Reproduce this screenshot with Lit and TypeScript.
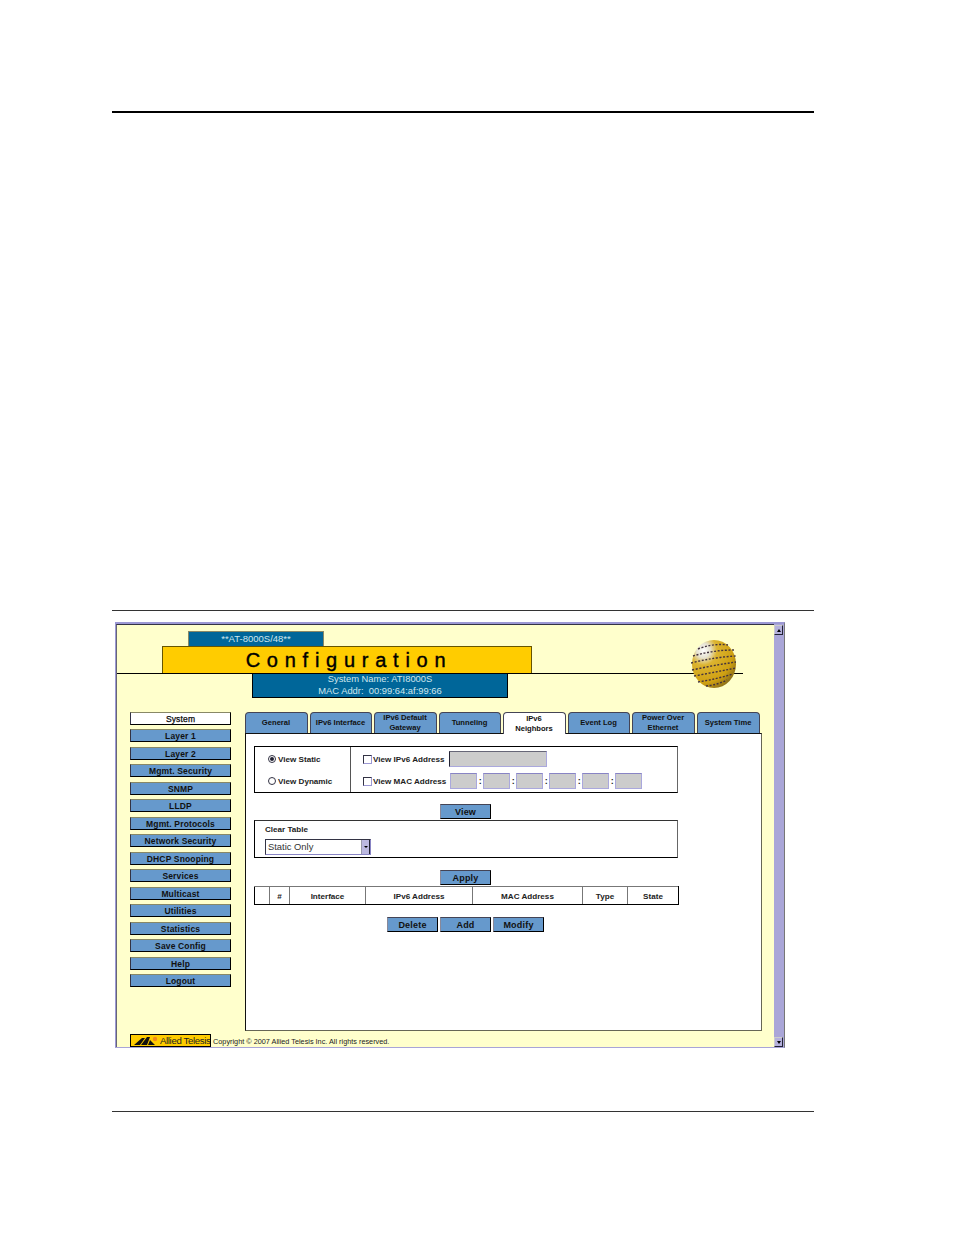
import { LitElement, html, css, svg } from "lit";
import { customElement } from "lit/decorators.js";

const NAV = ["System","Layer 1","Layer 2","Mgmt. Security","SNMP","LLDP","Mgmt. Protocols","Network Security","DHCP Snooping","Services","Multicast","Utilities","Statistics","Save Config","Help","Logout"];
const TABS: [string, number, boolean?][] = [
  ["General",63],["IPv6 Interface",62],["IPv6 Default<br>Gateway",63],["Tunneling",62],["IPv6<br>Neighbors",63,true],["Event Log",62],["Power Over<br>Ethernet",63],["System Time",63],
];
const COLS: [string, number][] = [["",15],["#",20],["Interface",76],["IPv6 Address",107],["MAC Address",110],["Type",45],["State",51]];

const bandPaths = [
  "M697 648 Q712 642 727 644", "M692 655 Q712 649 733 649", "M690 662 Q714 656 735 655",
  "M691 669 Q714 664 735 661", "M693 675 Q715 671 735 667", "M697 681 Q716 678 732 673", "M705 685 Q716 684 726 679",
];

@customElement("app-root")
export class AppRoot extends LitElement {
  static styles = css`
    :host { display: block; width: 954px; height: 1235px; background: #fff; font-family: "Liberation Sans", Arial, sans-serif; color: #111; overflow: hidden; }
    .page { padding: 111px 140px 0 112px; width: 702px; }
    .rule-thick { height: 2px; background: #000; width: 702px; }
    .rule { height: 1px; background: #333; width: 702px; }
    .r1 { margin-top: 497px; }
    .r2 { margin-top: 63px; }
    .window { margin: 11px 0 0 3px; width: 670px; height: 426px; box-sizing: border-box; display: flex; border-top: 2px solid #9c98d4; border-left: 1px solid #9c98d4; border-right: 1px solid #777; border-bottom: 1px solid #a8a4d8; }
    .main { position: relative; flex: 1; background: #ffffcc; border-top: 1px solid #334; border-left: 1px solid #667; height: 100%; box-sizing: border-box; overflow: hidden; }
    .tag { margin: 6px 0 0 71px; width: 136px; height: 15px; box-sizing: border-box; background: #006699; border: 1px solid #888866; border-bottom: 0; font-size: 9.5px; line-height: 14px; text-align: center; color: #cfe6ee; }
    .title-row { width: 626px; height: 28px; border-bottom: 1px solid #000; box-sizing: border-box; }
    .title { margin-left: 45px; width: 370px; height: 27px; box-sizing: border-box; background: #ffcc00; border: 1px solid #665500; border-bottom: 0; padding-left: 4px; font-size: 20px; letter-spacing: 6.75px; line-height: 27px; color: #000; text-align: center; -webkit-text-stroke: 0.4px #000; }
    .sysinfo { margin-left: 135px; width: 256px; height: 24px; box-sizing: border-box; background: #006699; border: 1px solid #000; border-top: 0; color: #cfe6ee; font-size: 9.4px; text-align: center; overflow: hidden; }
    .sysinfo div { line-height: 12px; margin-top: -1px; }
    .globe { position: absolute; left: 574px; top: 14px; width: 46px; height: 50px; }
    .body { display: flex; margin: 14px 0 0 13px; align-items: flex-start; }
    .nav { width: 101px; display: grid; grid-auto-rows: 13px; row-gap: 4.47px; margin-right: 14px; }
    .nav div { box-sizing: border-box; height: 13px; border: 1px solid #000; border-top-color: #888866; border-left-color: #334; background: #6699cc; font-size: 8.5px; font-weight: 700; text-align: center; line-height: 12px; letter-spacing: 0.15px; }
    .nav div.active { background: #fff; font-weight: 400; -webkit-text-stroke: 0.25px #000; }
    .content { width: 517px; }
    .tabs { display: flex; gap: 2px; height: 21px; }
    .tab { box-sizing: border-box; height: 21px; background: #6699cc; border: 1px solid #445; border-bottom: 0; border-radius: 4px 4px 0 0; font-size: 7.6px; font-weight: 700; display: flex; align-items: center; justify-content: center; text-align: center; line-height: 10px; padding-right: 1px; }
    .tab.on { background: #fff; height: 22px; position: relative; z-index: 1; }
    .panel { box-sizing: border-box; height: 298px; background: #fff; border: 1px solid #666655; border-top-color: #111; border-left-color: #111; padding: 12px 0 0 8px; }
    .opts { box-sizing: border-box; width: 424px; height: 47px; border: 1px solid #000; border-right-color: #666; display: grid; grid-template-columns: 96px 1fr; }
    .opts .left { border-right: 1px solid #555; display: grid; grid-template-rows: 1fr 1fr; padding: 1px 0 0 13px; align-items: center; }
    .opts .right { display: grid; grid-template-rows: 1fr 1fr; padding: 1px 0 0 12px; align-items: center; }
    .lbl { font-size: 8.1px; font-weight: 700; color: #222; display: flex; align-items: center; white-space: nowrap; }
    .radio { width: 8px; height: 8px; border-radius: 50%; border: 1px solid #334; box-sizing: border-box; background: #fff; margin-right: 2px; display: grid; place-items: center; }
    .radio i { width: 4px; height: 4px; border-radius: 50%; background: #223; }
    .check { width: 9px; height: 9px; box-sizing: border-box; border: 1px solid #334; border-right-color: #9c98d4; border-bottom-color: #9c98d4; background: #fff; margin-right: 1px; }
    .inp { box-sizing: border-box; background: #cccccc; border: 1px solid #aaa8dd; border-top-color: #8884c4; height: 16px; }
    .i6 { width: 98px; margin-left: 4px; border-left-color: #223; border-top-color: #667; }
    .mac { width: 27px; }
    .sep { width: 6px; text-align: center; font-size: 9px; font-weight: 700; }
    .macs { display: flex; align-items: center; margin-left: 4px; }
    .btnrow { display: flex; justify-content: center; gap: 2px; width: 423px; }
    .btn { box-sizing: border-box; width: 51px; height: 15px; background: #6699cc; border: 1px solid #000; border-top-color: #445; border-left-color: #889; font-size: 9px; font-weight: 700; text-align: center; line-height: 14px; letter-spacing: 0.2px; }
    .r-view { margin-top: 11px; }
    .clear { box-sizing: border-box; width: 424px; height: 38px; margin-top: 1px; border: 1px solid #000; border-right-color: #666; border-top-color: #333; padding: 3px 0 0 10px; }
    .clear .lbl { height: 10px; }
    .select { box-sizing: border-box; margin-top: 5px; width: 106px; height: 16px; background: #fff; border: 1px solid #8884c4; border-left-color: #334; border-top-color: #334; display: flex; align-items: center; justify-content: space-between; font-size: 9.4px; color: #333; padding-left: 2px; line-height: 14px; }
    .select b { width: 9px; height: 14px; box-sizing: border-box; background: #bbb8e0; border-left: 1px solid #99a; border-right: 1px solid #223; display: grid; place-items: center; }
    .select b i { width: 0; height: 0; border-left: 2px solid transparent; border-right: 2px solid transparent; border-top: 2px solid #000; }
    .r-apply { margin-top: 12px; }
    table { border-collapse: collapse; table-layout: fixed; width: 424px; margin-top: 1px; height: 19px; }
    th { box-sizing: border-box; border: 1px solid #777; border-bottom-color: #000; border-left-color: #555; padding: 1px 0 0; font-size: 8.1px; font-weight: 700; color: #222; }
    th:first-child { border-left-color: #000; }
    th:last-child { border-right-color: #000; }
    .r-act { margin-top: 12px; justify-content: flex-start; padding-left: 133px; width: auto; }
    .footer { position: absolute; left: 13px; bottom: 0; display: flex; align-items: center; height: 13px; }
    .logo { box-sizing: border-box; width: 81px; height: 13px; background: #ffcc00; border: 1px solid #000; display: flex; align-items: center; gap: 1px; padding-left: 2px; font-size: 9.6px; color: #222; letter-spacing: -0.35px; white-space: nowrap; overflow: hidden; }
    .logo svg { flex: none; }
    .copy { margin-left: 2px; font-size: 7.3px; color: #222; white-space: nowrap; position: relative; top: 1px; }
    .scroll { width: 10px; background: #aaa6d8; display: flex; flex-direction: column; justify-content: space-between; padding-top: 1px; box-sizing: border-box; }
    .sbtn { box-sizing: border-box; width: 9px; height: 10px; background: #b4b0dc; border: 1px solid #ccc; border-right-color: #223; border-bottom-color: #223; display: grid; place-items: center; }
    .sbtn i { width: 0; height: 0; border-left: 2px solid transparent; border-right: 2px solid transparent; border-bottom: 3px solid #000; }
    .sbtn.down i { border-bottom: 0; border-top: 3px solid #000; }
  `;

  private globe() {
    return html`<svg class="globe" viewBox="690 638 46 50" aria-hidden="true">
      <defs>
        <radialGradient id="g" cx="0.26" cy="0.22" r="0.9">
          <stop offset="0" stop-color="#fff"/><stop offset="0.17" stop-color="#e6e2d0"/>
          <stop offset="0.34" stop-color="#dcb430"/><stop offset="0.75" stop-color="#cfa012"/><stop offset="1" stop-color="#80661a"/>
        </radialGradient>
      </defs>
      <ellipse cx="713" cy="663" rx="22" ry="24" fill="url(#g)"/>
      ${bandPaths.map((d) => svg`<path d=${d} fill="none" stroke="#43323e" stroke-width="1.4" stroke-dasharray="2 1.6"/>`)}
    </svg>`;
  }

  render() {
    return html`<div class="page">
      <div class="rule-thick"></div>
      <div class="rule r1"></div>
      <div class="window">
        <div class="main">
          <div class="tag">**AT-8000S/48**</div>
          <div class="title-row"><div class="title">Configuration</div></div>
          <div class="sysinfo"><div>System Name: ATI8000S<br>MAC Addr: &nbsp;00:99:64:af:99:66</div></div>
          ${this.globe()}
          <div class="body">
            <div class="nav">${NAV.map((n, i) => html`<div class=${i === 0 ? "active" : ""}>${n}</div>`)}</div>
            <div class="content">
              <div class="tabs">${TABS.map(([t, w, on]) => html`<div class="tab ${on ? "on" : ""}" style="width:${w}px" .innerHTML=${t}></div>`)}</div>
              <div class="panel">
                <div class="opts">
                  <div class="left">
                    <div class="lbl"><span class="radio"><i></i></span>View Static</div>
                    <div class="lbl"><span class="radio"></span>View Dynamic</div>
                  </div>
                  <div class="right">
                    <div class="lbl"><span class="check"></span>View IPv6 Address<span class="inp i6"></span></div>
                    <div class="lbl"><span class="check"></span>View MAC Address<span class="macs">
                      ${[0,1,2,3,4,5].map((i) => html`${i ? html`<span class="sep">:</span>` : ""}<span class="inp mac"></span>`)}
                    </span></div>
                  </div>
                </div>
                <div class="btnrow r-view"><div class="btn">View</div></div>
                <div class="clear">
                  <div class="lbl">Clear Table</div>
                  <div class="select">Static Only<b><i></i></b></div>
                </div>
                <div class="btnrow r-apply"><div class="btn">Apply</div></div>
                <table><colgroup>${COLS.map(([, w]) => html`<col style="width:${w}px">`)}</colgroup>
                  <tr>${COLS.map(([c]) => html`<th>${c}</th>`)}</tr></table>
                <div class="btnrow r-act"><div class="btn">Delete</div><div class="btn">Add</div><div class="btn">Modify</div></div>
              </div>
            </div>
          </div>
          <div class="footer">
            <div class="logo">
              <svg width="26" height="9" viewBox="0 0 26 9" aria-hidden="true">
                <path d="M1 9 L9 2 L12 2 L7 9 Z M8 9 L14 1 L17 1 L14 9 Z M15 9 L17 4 L22 9 Z" fill="#111"/>
                <circle cx="22" cy="3" r="2.2" fill="#f08a1c"/>
              </svg>Allied Telesis
            </div>
            <div class="copy">Copyright © 2007 Allied Telesis Inc. All rights reserved.</div>
          </div>
        </div>
        <div class="scroll"><div class="sbtn"><i></i></div><div class="sbtn down"><i></i></div></div>
      </div>
      <div class="rule r2"></div>
    </div>`;
  }
}
